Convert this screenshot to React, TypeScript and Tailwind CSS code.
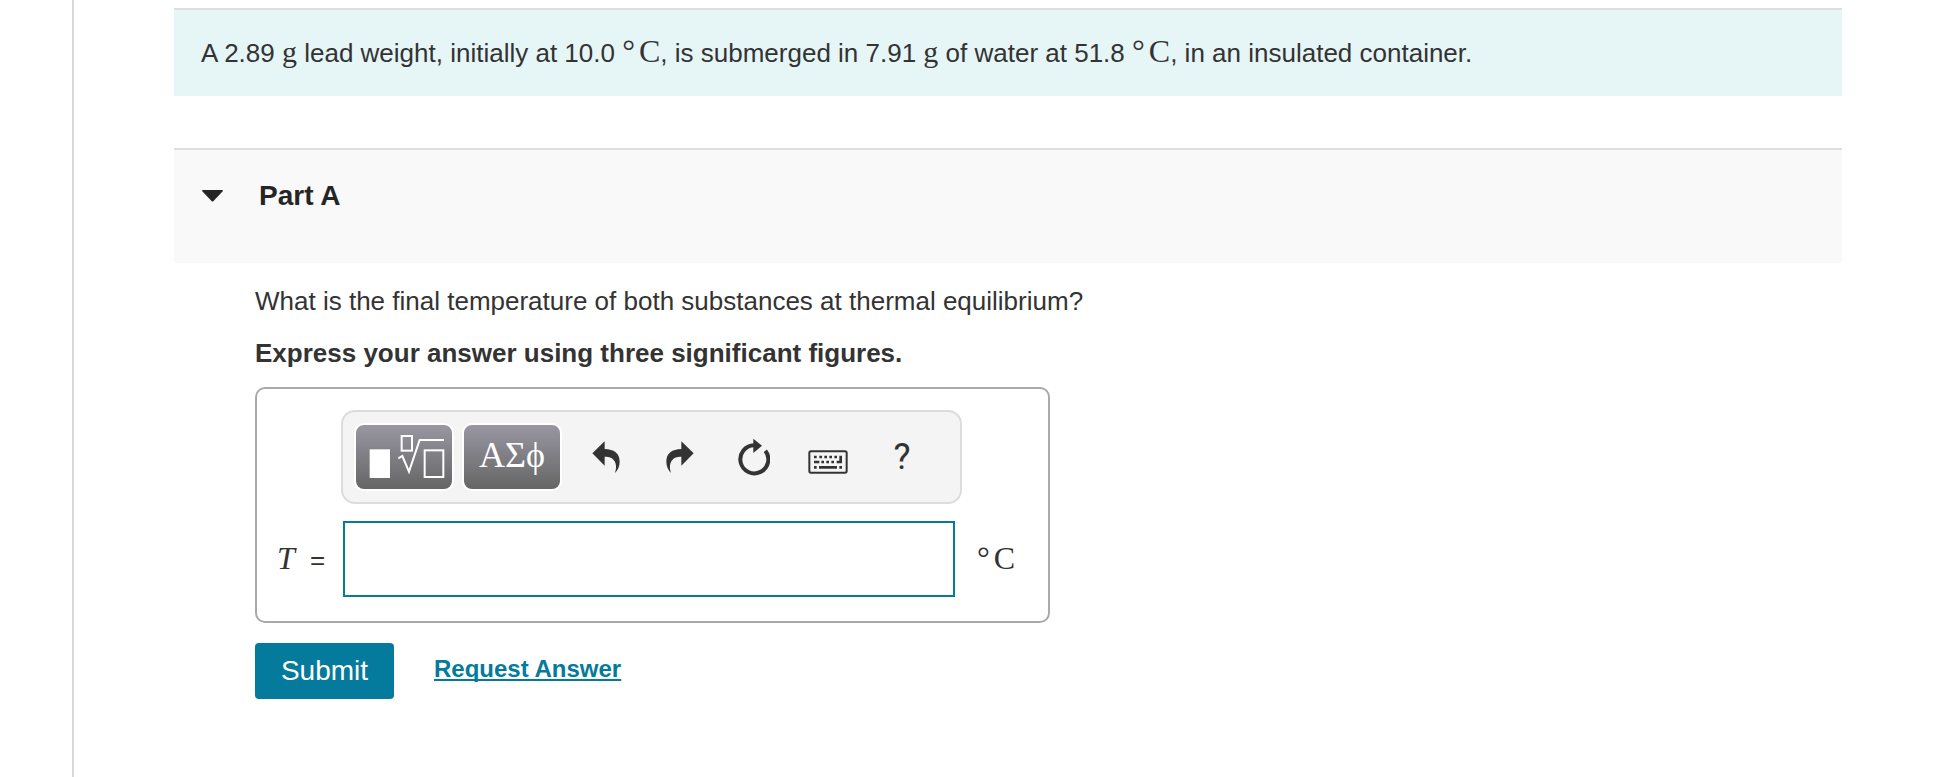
import { useState } from 'react';
import type { ReactNode } from 'react';

function UndoIcon() {
  return (
    <svg viewBox="61 121 84 99" className="w-7 h-[33px]" fill="currentColor" aria-hidden="true">
      <path d="M62 158 L99 122 V145 C127 146 144 157 144 183 C144 198 138 209 129 218 C135 206 134 191 129 182 C123 171 113 168 99 168 V195 Z" />
    </svg>
  );
}

function RedoIcon() {
  return (
    <svg viewBox="293 121 84 99" className="w-7 h-[33px]" fill="currentColor" aria-hidden="true">
      <path d="M376 158 L339 122 V145 C311 146 294 157 294 183 C294 198 300 209 309 218 C303 206 304 191 309 182 C315 171 325 168 339 168 V195 Z" />
    </svg>
  );
}

function ResetIcon() {
  return (
    <svg viewBox="504 114 96 114" className="w-8 h-[38px]" aria-hidden="true">
      <path d="M552 136 A42 42 0 1 0 586 152" fill="none" stroke="currentColor" strokeWidth="12" />
      <path d="M550 116 L576 137 L550 159 Z" fill="currentColor" />
    </svg>
  );
}

function KeyboardIcon() {
  return (
    <svg viewBox="0 0 120 102" className="w-10 h-[34px]" fill="currentColor" aria-hidden="true">
      <rect x="4" y="34" width="112" height="64" rx="5" fill="none" stroke="currentColor" strokeWidth="6" />
      <path d="M18 47h8v8h-8z M34 47h8v8h-8z M49 47h8v8h-8z M64 47h8v8h-8z M79 47h8v8h-8z" />
      <path d="M94 47h8v23h-16v-8h8z M18 62h16v8h-16z M40 62h8v8h-8z M55 62h8v8h-8z M70 62h8v8h-8z" />
      <path d="M18 78h8v8h-8z M33 78h54v8h-54z M94 78h8v8h-8z" />
    </svg>
  );
}

function TemplateIcon() {
  return (
    <svg viewBox="0 0 288 192" className="w-24 h-16" aria-hidden="true">
      <rect x="41" y="73" width="61" height="86" fill="#fff" />
      <g fill="none" stroke="#fff">
        <rect x="137" y="33" width="31" height="44" strokeWidth="6" />
        <rect x="206" y="76" width="56" height="80" strokeWidth="6" />
        <path d="M127 100 L139 93 L159 140 L191 45 H264" strokeWidth="6" />
      </g>
    </svg>
  );
}

function Celsius() {
  return (
    <span className="font-['Liberation_Serif',serif] text-[32px] leading-none whitespace-nowrap">
      <span className="mr-1">°</span>C
    </span>
  );
}

function Grams() {
  return <span className="font-['Liberation_Serif',serif] text-[30px] leading-none">g</span>;
}

function PaletteButton({ label, children }: { label: string; children: ReactNode }) {
  return (
    <button
      type="button"
      aria-label={label}
      className="flex h-[68px] w-[100px] shrink-0 items-center justify-center overflow-hidden rounded-[10px] border-2 border-white bg-linear-to-b from-[#9b98a4] to-[#646464] bg-origin-border text-white"
    >
      {children}
    </button>
  );
}

function ToolButton({ label, onClick, children }: { label: string; onClick?: () => void; children: ReactNode }) {
  return (
    <button
      type="button"
      aria-label={label}
      onClick={onClick}
      className="flex h-16 w-[74px] shrink-0 items-center justify-center text-[#333]"
    >
      {children}
    </button>
  );
}

export default function App() {
  const [open, setOpen] = useState(true);
  const [answer, setAnswer] = useState('');

  return (
    <div className="min-h-screen bg-white pl-[72px] font-['Liberation_Sans',Arial,sans-serif] text-[26px] leading-8 text-[#333]">
      <main className="min-h-screen border-l-2 border-[#d8d8d8] pt-2 pr-[91px] pl-[100px]">
        <section className="border-t-2 border-[#dedede] bg-[#e6f6f7] px-[27px] pt-[25px] pb-[27px]">
          <p>
            A 2.89 <Grams /> lead weight, initially at 10.0 <Celsius />, is submerged in 7.91 <Grams /> of water at
            51.8 <Celsius />, in an insulated container.
          </p>
        </section>

        <section className="mt-[52px]">
          <h2 className="border-t-2 border-[#dedede] bg-[#f9f9f9] pt-[30px] pb-[51px] pl-7">
            <button
              type="button"
              aria-expanded={open}
              onClick={() => setOpen(!open)}
              className="flex items-center gap-9 text-[28px] leading-8 font-bold text-[#252525]"
            >
              <svg viewBox="0 0 21 12" className="w-[21px] h-3" fill="currentColor" aria-hidden="true">
                <path d="M1 0 H20 Q21.500 0 20.500 1.500 L11.500 11 Q10.500 12 9.500 11 L.5 1.500 Q-.5 0 1 0Z" />
              </svg>
              Part A
            </button>
          </h2>

          {open && (
            <div className="pt-[22px] pl-[81px]">
              <p>What is the final temperature of both substances at thermal equilibrium?</p>
              <p className="mt-5 font-bold">Express your answer using three significant figures.</p>

              <form onSubmit={(e) => e.preventDefault()}>
                <div className="mt-[18px] w-[795px] rounded-[10px] border-2 border-[#a9a9a9] pt-[21px] pb-6 pl-5">
                  <div className="ml-16 flex w-[621px] items-center rounded-[14px] border-2 border-[#dcdcdc] bg-[#f4f4f4] py-[11px] pl-[11px]">
                    <div className="mr-[7px] flex gap-2">
                      <PaletteButton label="Templates">
                        <TemplateIcon />
                      </PaletteButton>
                      <PaletteButton label="Symbols">
                        <span className="pb-1 font-['Liberation_Serif',serif] text-[36px] leading-none">ΑΣϕ</span>
                      </PaletteButton>
                    </div>
                    <ToolButton label="Undo">
                      <UndoIcon />
                    </ToolButton>
                    <ToolButton label="Redo">
                      <RedoIcon />
                    </ToolButton>
                    <ToolButton label="Reset" onClick={() => setAnswer('')}>
                      <ResetIcon />
                    </ToolButton>
                    <ToolButton label="Keyboard shortcuts">
                      <KeyboardIcon />
                    </ToolButton>
                    <ToolButton label="Help">
                      <span className="font-[Roboto,sans-serif] text-[36px] leading-none">?</span>
                    </ToolButton>
                  </div>

                  <div className="mt-[17px] flex items-center">
                    <label htmlFor="answer" className="w-[66px] shrink-0 whitespace-nowrap">
                      <i className="mr-2 font-['Liberation_Serif',serif] text-[32px] leading-none">T</i> =
                    </label>
                    <input
                      id="answer"
                      type="text"
                      value={answer}
                      onChange={(e) => setAnswer(e.target.value)}
                      className="h-[76px] w-[612px] shrink-0 border-2 border-[#047a9c] bg-white px-3 outline-none"
                    />
                    <span className="ml-[22px]">
                      <Celsius />
                    </span>
                  </div>
                </div>

                <div className="mt-5 flex items-center gap-10">
                  <button type="submit" className="h-14 w-[139px] rounded bg-[#047a9c] text-[28px] text-white">
                    Submit
                  </button>
                  <a
                    href="#request-answer"
                    className="pb-1 text-2xl font-bold text-[#047a9c] underline decoration-2 underline-offset-2 [text-decoration-skip-ink:none]"
                  >
                    Request Answer
                  </a>
                </div>
              </form>
            </div>
          )}
        </section>
      </main>
    </div>
  );
}
